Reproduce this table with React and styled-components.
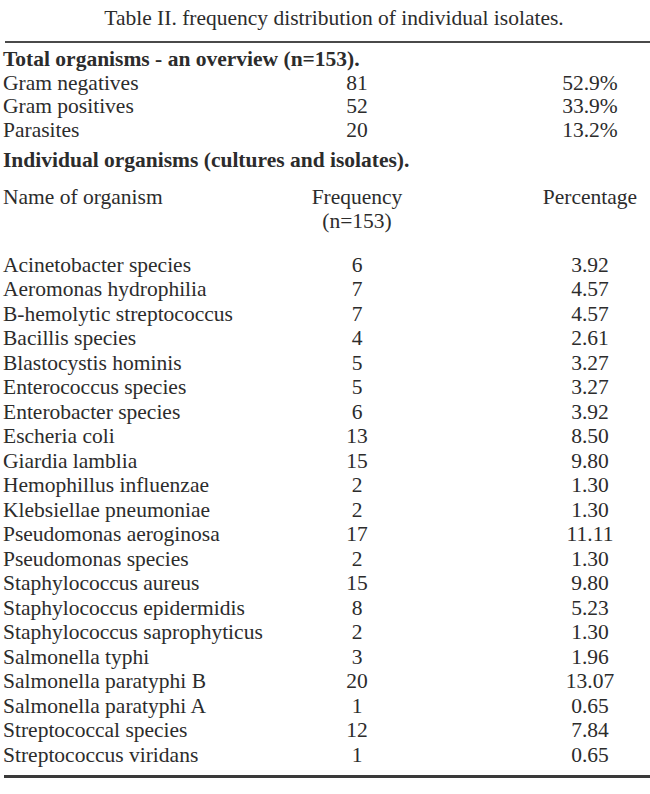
import React from 'react';
import styled, { createGlobalStyle } from 'styled-components';

const GlobalStyle = createGlobalStyle`
  html, body {
    margin: 0;
    padding: 0;
    background: #fff;
  }
  body {
    font-family: "Liberation Serif", "Times New Roman", serif;
    color: #2c2c2c;
  }
`;

const overview = [
  ['Gram negatives', '81', '52.9%'],
  ['Gram positives', '52', '33.9%'],
  ['Parasites', '20', '13.2%'],
];

const organisms = [
  ['Acinetobacter species', '6', '3.92'],
  ['Aeromonas hydrophilia', '7', '4.57'],
  ['B-hemolytic streptococcus', '7', '4.57'],
  ['Bacillis species', '4', '2.61'],
  ['Blastocystis hominis', '5', '3.27'],
  ['Enterococcus species', '5', '3.27'],
  ['Enterobacter species', '6', '3.92'],
  ['Escheria coli', '13', '8.50'],
  ['Giardia lamblia', '15', '9.80'],
  ['Hemophillus influenzae', '2', '1.30'],
  ['Klebsiellae pneumoniae', '2', '1.30'],
  ['Pseudomonas aeroginosa', '17', '11.11'],
  ['Pseudomonas species', '2', '1.30'],
  ['Staphylococcus aureus', '15', '9.80'],
  ['Staphylococcus epidermidis', '8', '5.23'],
  ['Staphylococcus saprophyticus', '2', '1.30'],
  ['Salmonella typhi', '3', '1.96'],
  ['Salmonella paratyphi B', '20', '13.07'],
  ['Salmonella paratyphi A', '1', '0.65'],
  ['Streptococcal species', '12', '7.84'],
  ['Streptococcus viridans', '1', '0.65'],
];

export default function App() {
  return (
    <>
      <GlobalStyle />
      <Page>
        <Title>Table II. frequency distribution of individual isolates.</Title>
        <Rule />

        <Section>
          <Heading>Total organisms - an overview (n=153).</Heading>
          {overview.map(([name, n, pct]) => (
            <Row key={name} $lh={23.5}>
              <Name>{name}</Name>
              <Num>{n}</Num>
              <Pct>{pct}</Pct>
            </Row>
          ))}
        </Section>

        <Section $gap={7}>
          <Heading>Individual organisms (cultures and isolates).</Heading>
        </Section>

        <Section $gap={12}>
          <Row $lh={24.5}>
            <Name>Name of organism</Name>
            <Num>Frequency<br />(n=153)</Num>
            <Pct>Percentage</Pct>
          </Row>
        </Section>

        <Section $gap={19}>
          {organisms.map(([name, n, pct]) => (
            <Row key={name} $lh={24.5}>
              <Name>{name}</Name>
              <Num>{n}</Num>
              <Pct>{pct}</Pct>
            </Row>
          ))}
        </Section>

        <Rule $thick />
      </Page>
    </>
  );
}

const Page = styled.div`
  width: 650px;
  min-height: 794px;
  box-sizing: border-box;
  padding: 6px 0 0 3px;
  font-size: 21.5px;
`;

const Title = styled.div`
  line-height: 24px;
  text-align: center;
  padding-left: 15px;
`;

const Rule = styled.div`
  margin: ${p => (p.$thick ? '8px 0 0 1px' : '11px 0 0 2px')};
  height: 0;
  border-top: ${p => (p.$thick ? '3px solid #3a3a3a' : '2px solid #4a4a4a')};
`;

const Section = styled.div`
  margin-top: ${p => (p.$gap != null ? p.$gap : 5)}px;
`;

const Heading = styled.div`
  font-weight: bold;
  line-height: 23.5px;
`;

const Row = styled.div`
  display: grid;
  grid-template-columns: 1fr 134px 106px 120px;
  line-height: ${p => p.$lh}px;
`;

const Name = styled.div`
  white-space: nowrap;
`;

const Num = styled.div`
  text-align: center;
`;

const Pct = styled.div`
  grid-column: 4;
  text-align: center;
`;
